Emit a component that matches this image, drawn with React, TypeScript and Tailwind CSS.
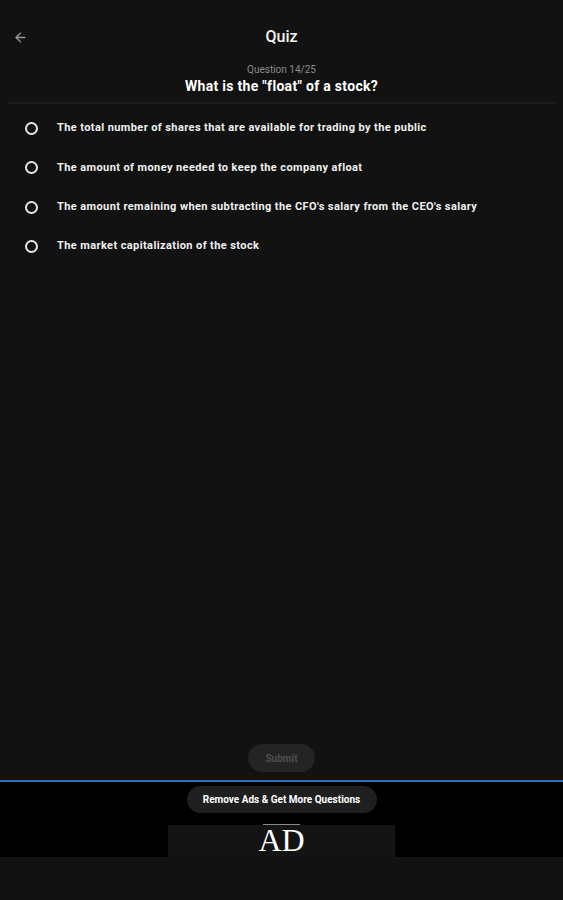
import { ArrowLeft } from 'lucide-react';

const answers = [
  'The total number of shares that are available for trading by the public',
  'The amount of money needed to keep the company afloat',
  "The amount remaining when subtracting the CFO's salary from the CEO's salary",
  'The market capitalization of the stock',
];

export default function App() {
  return (
    <div
      className="w-[563px] h-[900px] flex flex-col bg-[#121212] text-white overflow-hidden"
      style={{ fontFamily: 'Roboto, "Liberation Sans", sans-serif' }}
    >
      {/* Header */}
      <div className="relative mt-[15px] h-[44px] flex items-center justify-center">
        <button className="absolute left-[12px] top-[14px] p-[1px] text-[#9a9a9a]">
          <ArrowLeft size={15} strokeWidth={2.2} />
        </button>
        <h1 className="text-[16px] font-medium text-[#f2f2f2]">Quiz</h1>
      </div>

      {/* Question */}
      <div className="flex flex-col items-center">
        <p className="mt-[5px] text-[10px] leading-[12px] text-[#8a8a8a]">Question 14/25</p>
        <h2 className="mt-[1px] text-[14px] leading-[18px] font-bold text-white tracking-[0.3px]">
          What is the "float" of a stock?
        </h2>
      </div>
      <div className="mt-[7px] mx-[7px] h-[2px] bg-[#1b1b1b]" />

      {/* Answers */}
      <div className="flex-1 pt-[5px]">
        {answers.map((answer, index) => (
          <label key={index} className="h-[39.3px] flex items-center cursor-pointer">
            <span className="ml-[25px] w-[13px] h-[13px] rounded-full border-2 border-[#e8e8e8]" />
            <span className="ml-[19px] text-[11px] font-bold text-[#f0f0f0] tracking-[0.4px]">
              {answer}
            </span>
          </label>
        ))}
      </div>

      {/* Submit */}
      <div className="flex justify-center mb-[8px]">
        <button
          disabled
          className="h-[28px] w-[67px] rounded-full bg-[#242424] text-[10px] font-bold text-[#4f4f4f]"
        >
          Submit
        </button>
      </div>
      <div className="h-[2px] bg-[#2b6fb8]" />

      {/* Ad area */}
      <div className="h-[75px] bg-black flex flex-col items-center pt-[4px]">
        <button className="h-[27px] w-[190px] rounded-full bg-[#1f1f1f] text-[10px] font-bold text-white">
          Remove Ads &amp; Get More Questions
        </button>
        <div className="mt-[12px] w-[227px] h-[32px] bg-[#141414] flex justify-center">
          <div className="relative flex flex-col items-center">
            <div className="absolute -top-[1px] w-[37px] h-[1px] bg-[#8a8a8a]" />
            <span
              className="text-[32px] leading-[32px] text-white -mt-[1px]"
              style={{ fontFamily: '"Liberation Serif", serif' }}
            >
              AD
            </span>
          </div>
        </div>
      </div>
      <div className="h-[43px] bg-[#121212]" />
    </div>
  );
}
